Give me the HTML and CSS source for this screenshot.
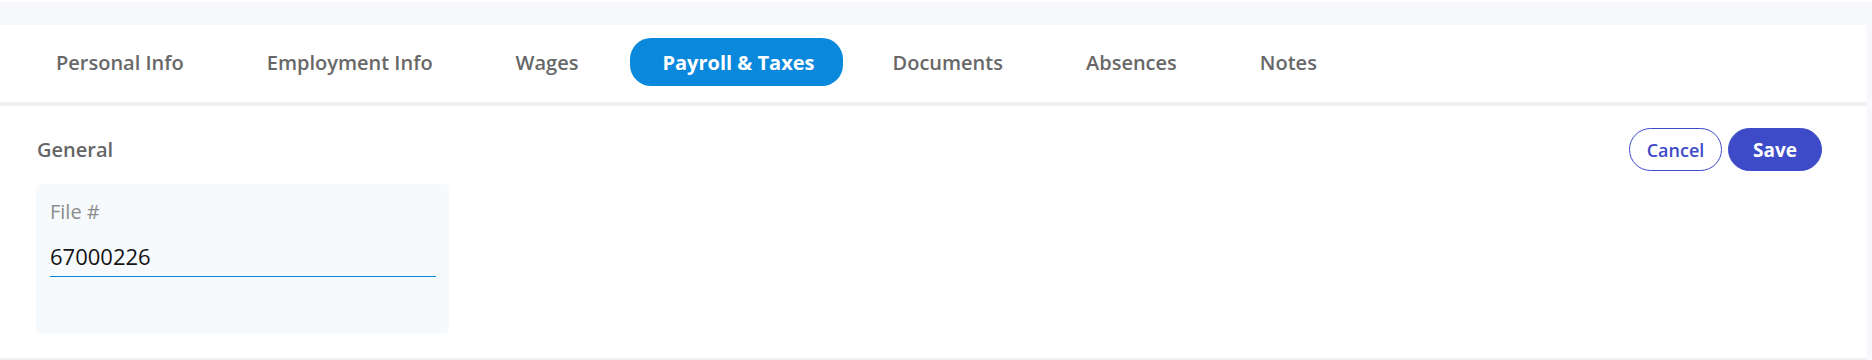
FILE: index.html
```html
<!DOCTYPE html>
<html lang="en">
<head>
<meta charset="utf-8">
<title>Payroll &amp; Taxes</title>
<link rel="stylesheet" href="styles.css">
</head>
<body>
<div class="topline"></div>
<div class="page">
  <nav class="tabs">
    <a class="tab">Personal Info</a>
    <a class="tab">Employment Info</a>
    <a class="tab">Wages</a>
    <a class="tab active">Payroll &amp; Taxes</a>
    <a class="tab">Documents</a>
    <a class="tab">Absences</a>
    <a class="tab">Notes</a>
  </nav>
  <section class="content">
    <div class="header">
      <h2 class="title">General</h2>
      <div class="actions">
        <button class="btn btn-outline">Cancel</button>
        <button class="btn btn-primary">Save</button>
      </div>
    </div>
    <div class="card">
      <label class="label">File #</label>
      <div class="value">67000226</div>
    </div>
  </section>
</div>
</body>
</html>
```
FILE: styles.css
```css
* { box-sizing: border-box; }
html, body { margin: 0; padding: 0; }
body {
  background: #f7f8fc;
  font-family: "Open Sans", "Noto Sans", sans-serif;
  width: 1872px;
  height: 360px;
  overflow: hidden;
}
.topline { height: 2px; background: #ffffff; }
.page {
  margin-top: 23px;
  width: 1867px;
  background: #ffffff;
  border-bottom: 2px solid #f0f0f0;
}
.tabs {
  display: flex;
  align-items: center;
  gap: 17px;
  height: 81px;
  padding: 15px 0 18px 23px;
  border-bottom: 4px solid #f0f0f1;
}
.tab {
  display: flex;
  align-items: center;
  height: 48px;
  padding: 1px 33px 0;
  font-size: 20px;
  font-weight: 600;
  color: #686868;
  border-radius: 21px;
  white-space: nowrap;
}
.tab.active {
  background: #0a89dc;
  color: #ffffff;
  font-weight: 700;
  margin-left: 2px;
  padding: 1px 28px 0 32px;
}
.content {
  padding: 22px 45px 24px 36px;
}
.header {
  display: flex;
  align-items: center;
  justify-content: space-between;
  height: 43px;
  margin-bottom: 13px;
}
.title {
  margin: 0 0 0 1px;
  font-size: 20px;
  font-weight: 600;
  color: #666666;
}
.actions { display: flex; gap: 6px; }
.btn {
  height: 43px;
  border-radius: 22px;
  font-family: "Open Sans", "Noto Sans", sans-serif;
  font-size: 18px;
  padding: 0;
  cursor: pointer;
}
.btn-outline {
  width: 93px;
  background: #ffffff;
  border: 1px solid #3d4bc9;
  color: #3d4bc9;
  font-weight: 600;
}
.btn-primary {
  width: 94px;
  background: #3d4bc9;
  border: 1px solid #3d4bc9;
  color: #ffffff;
  font-weight: 700;
  font-size: 19px;
}
.card {
  width: 413px;
  height: 150px;
  background: #f7fafd;
  border-radius: 5px;
  padding: 14px 13px 0 14px;
}
.label {
  display: block;
  font-size: 20px;
  line-height: 28px;
  color: #8c8c8c;
}
.value {
  margin-top: 15px;
  font-size: 22px;
  line-height: 30px;
  color: #141414;
  padding-bottom: 5px;
  border-bottom: 1.5px solid #0a89dc;
}
```
